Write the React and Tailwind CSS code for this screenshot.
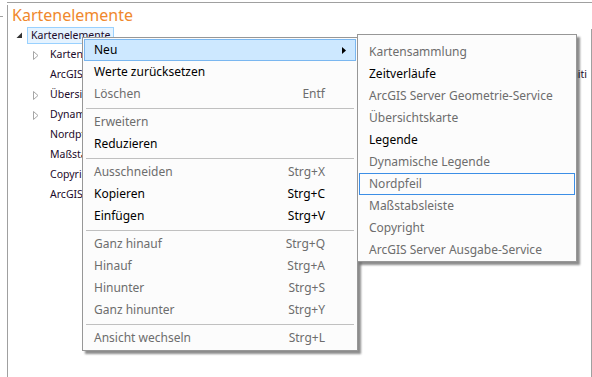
import React from 'react';

const menu = [
  { label: 'Neu', hot: true, sub: true },
  { label: 'Werte zurücksetzen' },
  { label: 'Löschen', off: true, key: 'Entf' },
  'sep',
  { label: 'Erweitern', off: true },
  { label: 'Reduzieren' },
  'sep',
  { label: 'Ausschneiden', off: true, key: 'Strg+X' },
  { label: 'Kopieren', key: 'Strg+C' },
  { label: 'Einfügen', key: 'Strg+V' },
  'sep',
  { label: 'Ganz hinauf', off: true, key: 'Strg+Q' },
  { label: 'Hinauf', off: true, key: 'Strg+A' },
  { label: 'Hinunter', off: true, key: 'Strg+S' },
  { label: 'Ganz hinunter', off: true, key: 'Strg+Y' },
  'sep',
  { label: 'Ansicht wechseln', off: true, key: 'Strg+L' },
];

const subItems = [
  { label: 'Kartensammlung', off: true },
  { label: 'Zeitverläufe' },
  { label: 'ArcGIS Server Geometrie-Service', off: true },
  { label: 'Übersichtskarte', off: true },
  { label: 'Legende' },
  { label: 'Dynamische Legende', off: true },
  { label: 'Nordpfeil', off: true, focus: true },
  { label: 'Maßstabsleiste', off: true },
  { label: 'Copyright', off: true },
  { label: 'ArcGIS Server Ausgabe-Service', off: true },
];

const children = [
  { label: 'Kartensammlung', arrow: true },
  { label: 'ArcGIS Server Geometrie-Service', tail: 'Definiti' },
  { label: 'Übersichtskarte', arrow: true },
  { label: 'Dynamische Legende', arrow: true },
  { label: 'Nordpfeil' },
  { label: 'Maßstabsleiste' },
  { label: 'Copyright' },
  { label: 'ArcGIS Server Ausgabe-Service' },
];

function Hollow() {
  return (
    <svg width="6" height="9" viewBox="0 0 6 9" className="shrink-0">
      <path d="M0.5 0.5 L5 4.5 L0.5 8.5 Z" fill="none" stroke="#a6a6a6" strokeWidth="1" />
    </svg>
  );
}

export default function App() {
  return (
    <div className="relative w-[592px] h-[377px] bg-white overflow-hidden text-[12px] text-[#000]"
      style={{ fontFamily: '"Noto Sans", "Open Sans", sans-serif' }}>
      {/* frame lines */}
      <div className="absolute left-[7px] top-[2px] right-0 h-px bg-[#a0a0a0]" />
      <div className="absolute left-[7px] top-[5px] bottom-0 w-px bg-[#a0a0a0]" />
      <div className="absolute left-0 top-[16px] w-[3px] h-px bg-[#a0a0a0]" />
      <div className="absolute right-0 top-[29px] bottom-0 w-px bg-[#a0a0a0]" />

      {/* tree panel */}
      <div className="pl-[12px] pt-[5px]">
        <div className="text-[16px] leading-[20px] text-[#f0882c]">Kartenelemente</div>
        <div className="flex items-center h-[18px] mt-[1px] pl-[4px] text-[10.5px]">
          <svg width="7" height="7" viewBox="0 0 7 7" className="shrink-0">
            <path d="M6 0.5 L6 6 L0.5 6 Z" fill="#333" />
          </svg>
          <div className="ml-[4px] h-[17px] px-[3px] flex items-center border border-[#99d1ff] bg-[#e5f3ff] leading-none text-[#1b0a2a]">
            Kartenelemente
          </div>
        </div>
        <div className="mt-[1px] whitespace-nowrap text-[10.5px]">
          {children.map((c, i) => (
            <div key={i} className="flex items-center h-[20px]">
              <div className="w-[38px] flex justify-end pr-[11px]">{c.arrow && <Hollow />}</div>
              {c.tail ? (
                <div className="w-[537px] flex justify-between text-[#1b0a2a]">
                  <span>{c.label}</span>
                  <span>{c.tail}</span>
                </div>
              ) : (
                <span className="text-[#1b0a2a]">{c.label}</span>
              )}
            </div>
          ))}
        </div>
      </div>

      {/* context menu */}
      <div className="absolute left-[82px] top-[37px] w-[276px] bg-[#fcfcfc] border border-[#979797] p-px shadow-[3px_3px_2px_rgba(0,0,0,0.45)]">
        {menu.map((m, i) =>
          m === 'sep' ? (
            <div key={i} className="h-[6px] flex items-center px-[2px]">
              <div className="h-px w-full bg-[#c0c0c0]" />
            </div>
          ) : (
            <div key={i}
              className={
                'h-[22px] flex items-center pl-[9px] pr-[12px] border ' +
                (m.hot ? 'border-[#7ab7f0] bg-[#cde8ff]' : 'border-transparent') +
                (m.off ? ' text-[#6d6d6d]' : ' text-[#000]')
              }>
              <span className="flex-1">{m.label}</span>
              {m.key && <span className="w-[40px] text-right mr-[18px]">{m.key}</span>}
              {m.sub && (
                <svg width="4" height="7" viewBox="0 0 4 7" className="mr-[-3px]">
                  <path d="M0 0 L4 3.5 L0 7 Z" fill="#000" />
                </svg>
              )}
            </div>
          )
        )}
      </div>

      {/* submenu */}
      <div className="absolute left-[357px] top-[34px] w-[220px] bg-[#fcfcfc] border border-[#979797] pt-[6px] px-px shadow-[3px_3px_2px_rgba(0,0,0,0.45)]">
        {subItems.map((s, i) => (
          <div key={i}
            className={
              'h-[22px] flex items-center pl-[9px] border ' +
              (s.focus ? 'border-[#3c8ee6]' : 'border-transparent') +
              (s.off ? ' text-[#6d6d6d]' : ' text-[#000]')
            }>
            {s.label}
          </div>
        ))}
      </div>
    </div>
  );
}
